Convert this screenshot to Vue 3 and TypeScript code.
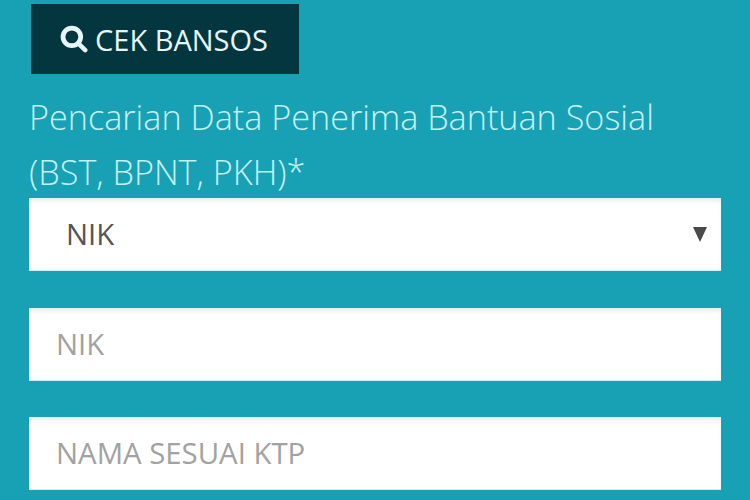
<script setup lang="ts">
const fields: string[] = ['NIK', 'NAMA SESUAI KTP']
</script>

<template>
  <main class="page">
    <button class="search" type="button">
      <svg class="icon" viewBox="0 0 26 26" aria-hidden="true">
        <circle cx="11" cy="11" r="8.2" fill="none" stroke="currentColor" stroke-width="4.4" />
        <path d="M17 17l6.4 6.4" fill="none" stroke="currentColor" stroke-width="4.2" stroke-linecap="round" />
      </svg>
      <span>CEK BANSOS</span>
    </button>
    <h1 class="title">Pencarian Data Penerima Bantuan Sosial<br />(BST, BPNT, PKH)*</h1>
    <div class="box select">
      <span>NIK</span>
      <i class="arrow"></i>
    </div>
    <div class="fields">
      <div v-for="f in fields" :key="f" class="box field">{{ f }}</div>
    </div>
  </main>
</template>

<style>
html, body { margin: 0; background: #18a0b5; }
</style>

<style scoped>
.page {
  box-sizing: border-box;
  width: 750px;
  height: 500px;
  overflow: hidden;
  padding: 4px 29px 0;
  background: #18a0b5;
  font-family: "Open Sans", "Liberation Sans", sans-serif;
}
.search {
  display: flex;
  align-items: center;
  gap: 7px;
  box-sizing: border-box;
  width: 268px;
  height: 70px;
  margin-left: 2px;
  padding: 0 0 0 29px;
  border: 0;
  background: #04363f;
  color: #e6f6f8;
  font: 400 29px "Open Sans", sans-serif;
}
.icon { width: 28px; height: 28px; flex: none; }
.title {
  margin: 15px 0 0;
  color: #c4f0f3;
  font-size: 34.2px;
  font-weight: 300;
  line-height: 55px;
}
.box {
  box-sizing: border-box;
  display: flex;
  align-items: center;
  height: 73px;
  background: #fff;
  box-shadow: inset 0 4px 4px -1px #e4edef;
  border-bottom: 1px solid #c8f0f2;
  font-size: 29.35px;
}
.select {
  margin-top: -1px;
  padding: 0 14px 0 37px;
  justify-content: space-between;
  color: #555;
}
.arrow {
  width: 0;
  height: 0;
  border-left: 7px solid transparent;
  border-right: 7px solid transparent;
  border-top: 15px solid #4a4a4a;
}
.fields {
  display: flex;
  flex-direction: column;
  gap: 36px;
  margin-top: 37px;
}
.field {
  padding-left: 27px;
  color: #a2a2a2;
}
</style>
